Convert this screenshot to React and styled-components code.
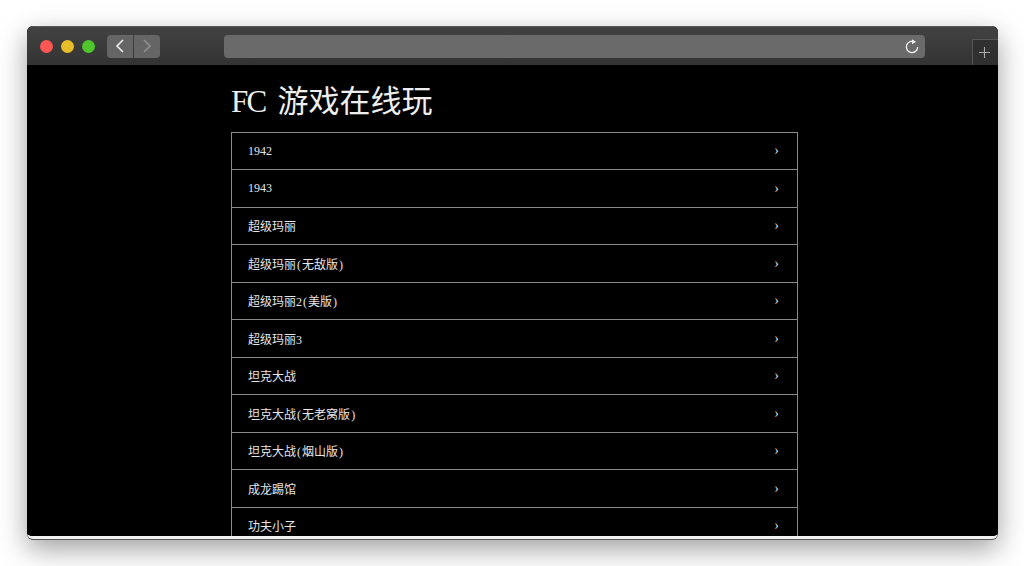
import React from 'react';
import styled, { createGlobalStyle } from 'styled-components';

const GlobalStyle = createGlobalStyle`
    html, body {
        margin: 0;
        padding: 0;
        background: #fff;
        height: 100%;
        overflow: hidden;
    }
`;

const Stage = styled.div`
    width: 1024px;
    height: 566px;
    padding: 26px 26px 27px 27px;
    box-sizing: border-box;
`;

const Window = styled.div`
    width: 971px;
    height: 513px;
    box-sizing: border-box;
    display: flex;
    flex-direction: column;
    border-radius: 6px;
    overflow: hidden;
    background: #000;
    border-bottom: 3px solid #f2f2f2;
    box-shadow: 0 1px 0 #555, 0 10px 28px rgba(0,0,0,0.38);
`;

const Toolbar = styled.div`
    height: 39px;
    flex: none;
    display: flex;
    align-items: center;
    box-sizing: border-box;
    padding-left: 13px;
    background: linear-gradient(#424242, #333);
    border-top: 1px solid #5a5a5a;
`;

const Light = styled.span`
    width: 13px;
    height: 13px;
    border-radius: 50%;
    margin-right: 8px;
    background: ${({color}) => color};
`;

const NavGroup = styled.div`
    display: flex;
    gap: 1px;
    margin-left: 4px;
`;

const NavButton = styled.div`
    width: 26px;
    height: 23px;
    display: flex;
    align-items: center;
    justify-content: center;
    background: #656565;
    border-radius: ${({right}) => right ? '0 4px 4px 0' : '4px 0 0 4px'};
`;

const AddressBar = styled.div`
    width: 701px;
    height: 23px;
    margin-left: 64px;
    padding-right: 5px;
    box-sizing: border-box;
    display: flex;
    align-items: center;
    justify-content: flex-end;
    background: #6a6a6a;
    border-radius: 4px;
`;

const NewTab = styled.div`
    width: 26px;
    height: 26px;
    margin-left: auto;
    padding-right: 2px;
    align-self: flex-end;
    display: flex;
    align-items: center;
    justify-content: center;
    box-sizing: border-box;
    background: #303030;
    border-left: 1px solid #555;
    border-top: 1px solid #555;
`;

const Content = styled.div`
    flex: 1;
    min-height: 0;
    overflow: hidden;
    background: #000;
    padding-left: 204px;
    font-family: "Liberation Serif", "Noto Sans CJK SC", serif;
    color: #e6e6e6;
`;

const Title = styled.h1`
    margin: 0;
    height: 66.5px;
    line-height: 74px;
    font-size: 31px;
    font-weight: 400;
    color: #eee;
    white-space: pre;
`;

const List = styled.ul`
    width: 567px;
    margin: 0;
    padding: 0;
    list-style: none;
    box-sizing: border-box;
    border: 1px solid #8a8a8a;
    border-bottom: 0;
`;

const Row = styled.li`
    height: 37.5px;
    box-sizing: border-box;
    display: flex;
    align-items: center;
    justify-content: space-between;
    padding: 1px 18px 0 16px;
    font-size: 12px;
    border-bottom: 1px solid #8a8a8a;
`;

const Arrow = styled.span`
    font-size: 14px;
    color: #ddd;
`;

const Half = styled.span`
    display: inline-block;
    width: 0.5em;
    text-align: center;
`;

const Grid = ({text}) => (
    <span>
        {Array.from(text).map((ch, i) =>
            /[\x20-\x7e]/.test(ch) ? <Half key={i}>{ch}</Half> : ch
        )}
    </span>
);

const games = [
    '1942',
    '1943',
    '超级玛丽',
    '超级玛丽(无敌版)',
    '超级玛丽2(美版)',
    '超级玛丽3',
    '坦克大战',
    '坦克大战(无老窝版)',
    '坦克大战(烟山版)',
    '成龙踢馆',
    '功夫小子',
];

const App = () => {
    return (
        <Stage>
            <GlobalStyle />
            <Window>
                <Toolbar>
                    <Light color="#fc5753" />
                    <Light color="#e8bd2b" />
                    <Light color="#4fc42d" />
                    <NavGroup>
                        <NavButton>
                            <svg width="12" height="16" viewBox="0 0 12 16" fill="none" stroke="#f0f0f0" strokeWidth="1.6">
                                <path d="M9 2 L3 8 L9 14" />
                            </svg>
                        </NavButton>
                        <NavButton right>
                            <svg width="12" height="16" viewBox="0 0 12 16" fill="none" stroke="#8f8f8f" strokeWidth="1.6">
                                <path d="M3 2 L9 8 L3 14" />
                            </svg>
                        </NavButton>
                    </NavGroup>
                    <AddressBar>
                        <svg width="16" height="17" viewBox="0 0 14 15" fill="none" stroke="#eee" strokeWidth="1.2">
                            <path d="M9.6 3.6 A5 5 0 1 0 12 8" />
                            <path d="M7 1 L10.5 3.4 L7 5.6 Z" fill="#eee" stroke="none" />
                        </svg>
                    </AddressBar>
                    <NewTab>
                        <svg width="13" height="13" viewBox="0 0 13 13" stroke="#aaa" strokeWidth="1.1">
                            <path d="M6.5 1 V12 M1 6.5 H12" />
                        </svg>
                    </NewTab>
                </Toolbar>
                <Content>
                    <Title><Grid text="FC 游戏在线玩" /></Title>
                    <List>
                        {games.map((name) => (
                            <Row key={name}>
                                <Grid text={name} />
                                <Arrow>›</Arrow>
                            </Row>
                        ))}
                    </List>
                </Content>
            </Window>
        </Stage>
    );
};

export default App;
